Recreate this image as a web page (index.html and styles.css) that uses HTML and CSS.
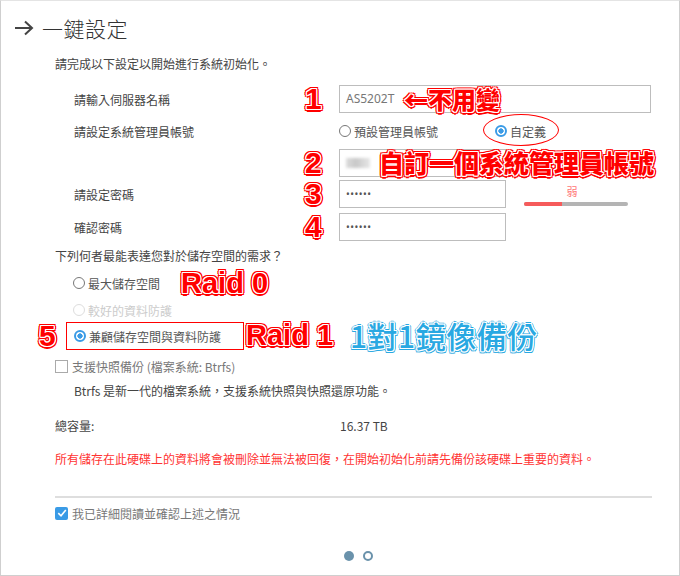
FILE: index.html
```html
<!DOCTYPE html>
<html lang="zh-Hant">
<head>
    <meta charset="UTF-8">
    <meta name="viewport" content="width=device-width, initial-scale=1.0">
    <title>一鍵設定</title>
    <link rel="stylesheet" href="styles.css">
</head>
<body>

    <div class="frame">

        <h1 class="title">
            <svg class="title-arrow" width="20" height="16" viewBox="0 0 20 16">
                <path d="M1 8 H18 M11 1.5 L18 8 L11 14.5" fill="none" stroke="#444" stroke-width="2"/>
            </svg>
            一鍵設定
        </h1>

        <div class="content">
            <p class="intro">請完成以下設定以開始進行系統初始化。</p>

            <div class="row row-name">
                <span class="label">請輸入伺服器名稱</span>
                <span class="mark num">1</span>
                <div class="field wide">
                    AS5202T
                    <span class="mark note-keep">&#8592;不用變</span>
                </div>
            </div>

            <div class="row row-admin">
                <span class="label">請設定系統管理員帳號</span>
                <span class="num"></span>
                <div class="choices">
                    <label class="radio"><span class="dot"></span>預設管理員帳號</label>
                    <label class="radio custom"><span class="dot on"></span>自定義<span class="ring"></span></label>
                </div>
            </div>

            <div class="row row-user">
                <span class="label"></span>
                <span class="mark num">2</span>
                <div class="field">
                    <span class="blur"></span>
                    <span class="mark note-user">自訂一個系統管理員帳號</span>
                </div>
            </div>

            <div class="row row-pass">
                <span class="label">請設定密碼</span>
                <span class="mark num">3</span>
                <div class="field pass">••••••</div>
                <div class="meter">
                    <span class="meter-text">弱</span>
                    <span class="meter-bar"><span class="meter-fill"></span></span>
                </div>
            </div>

            <div class="row row-confirm">
                <span class="label">確認密碼</span>
                <span class="mark num">4</span>
                <div class="field pass">••••••</div>
            </div>

            <p class="question">下列何者最能表達您對於儲存空間的需求？</p>

            <div class="options">
                <label class="radio opt opt-1"><span class="dot"></span>最大儲存空間<span class="mark note-raid0">Raid 0</span></label>
                <label class="radio opt opt-2 disabled"><span class="dot"></span>較好的資料防護</label>
                <label class="radio opt opt-3">
                    <span class="mark num num-5">5</span>
                    <span class="boxed"><span class="dot on"></span>兼顧儲存空間與資料防護</span>
                    <span class="mark note-raid1">Raid 1</span>
                    <span class="mark blue note-mirror">1對1鏡像備份</span>
                </label>
            </div>

            <label class="check snap"><span class="box"></span>支援快照備份 (檔案系統: Btrfs)</label>
            <p class="btrfs">Btrfs 是新一代的檔案系統，支援系統快照與快照還原功能。</p>

            <div class="capacity">
                <span class="cap-label">總容量:</span>
                <span>16.37 TB</span>
            </div>

            <p class="warning">所有儲存在此硬碟上的資料將會被刪除並無法被回復，在開始初始化前請先備份該硬碟上重要的資料。</p>

            <hr class="divider">

            <label class="check ack">
                <span class="box on">
                    <svg width="12" height="12" viewBox="0 0 12 12"><path d="M2.3 6.2 L5 8.8 L9.8 3" fill="none" stroke="#fff" stroke-width="1.6"/></svg>
                </span>我已詳細閱讀並確認上述之情況
            </label>

            <div class="pager">
                <span class="pdot active"></span>
                <span class="pdot"></span>
            </div>
        </div>

    </div>

</body>
</html>
```

FILE: styles.css
```css
body {
    margin: 0;
    background-color: #fff;
    font-family: "Noto Sans CJK TC", "Noto Sans", sans-serif;
    font-size: 12px;
    color: #444;
}

.frame {
    width: 680px;
    height: 576px;
    box-sizing: border-box;
    border: 1px solid #cfcfcf;
    border-top-color: #e4e4e4;
    overflow: hidden;
}

.title {
    margin: 13px 0 0 13px;
    height: 28px;
    display: flex;
    align-items: center;
    gap: 8px;
    font-size: 21px;
    font-weight: 300;
    color: #333;
    letter-spacing: 0.5px;
}

.content {
    padding-left: 54px;
    padding-right: 27px;
}

.intro {
    margin: 14px 0 0;
    line-height: 16px;
}

/* form rows */
.row {
    display: grid;
    grid-template-columns: 229px 36px auto auto;
    justify-content: start;
    align-items: center;
    padding-left: 19px;
    height: 28px;
}

.row-name { margin-top: 12px; }
.row-admin { margin-top: 9px; height: 20px; }
.row-user { margin-top: 7px; }
.row-pass { margin-top: 3px; }
.row-confirm { margin-top: 5px; }

.field {
    position: relative;
    width: 167px;
    height: 28px;
    box-sizing: border-box;
    border: 1px solid #bdbdbd;
    padding-left: 6px;
    line-height: 26px;
    color: #777;
    font-family: "Noto Sans", sans-serif;
}

.field.wide {
    width: 312px;
}

.field.pass {
    color: #555;
    font-size: 10px;
    letter-spacing: 0.5px;
}

.blur {
    display: inline-block;
    width: 24px;
    height: 10px;
    margin-top: 8px;
    background: linear-gradient(90deg, #ddd, #c8c8c8 40%, #e6e6e6);
    filter: blur(1.5px);
}

/* annotations drawn over the screenshot */
.mark {
    font-family: "Liberation Sans", Arial, "Noto Sans CJK TC", sans-serif;
    font-weight: bold;
    color: #f00;
    line-height: 1;
    white-space: nowrap;
    text-shadow:
        1px 0 0 #fff, -1px 0 0 #fff, 0 1px 0 #fff, 0 -1px 0 #fff,
        1px 1px 0 #fff, -1px -1px 0 #fff, 1px -1px 0 #fff, -1px 1px 0 #fff,
        2.5px 0 0 #f00, -2.5px 0 0 #f00, 0 2.5px 0 #f00, 0 -2.5px 0 #f00,
        2px 2px 0 #f00, -2px -2px 0 #f00, 2px -2px 0 #f00, -2px 2px 0 #f00;
}

.mark.blue {
    color: #29a8e2;
    text-shadow:
        1px 0 0 #fff, -1px 0 0 #fff, 0 1px 0 #fff, 0 -1px 0 #fff,
        1px 1px 0 #fff, -1px -1px 0 #fff, 1px -1px 0 #fff, -1px 1px 0 #fff,
        2px 0 0 #29a8e2, -2px 0 0 #29a8e2, 0 2px 0 #29a8e2, 0 -2px 0 #29a8e2,
        1.5px 1.5px 0 #29a8e2, -1.5px -1.5px 0 #29a8e2, 1.5px -1.5px 0 #29a8e2, -1.5px 1.5px 0 #29a8e2;
}

.num {
    font-size: 30px;
    padding-left: 2px;
}

.note-keep {
    position: absolute;
    left: 64px;
    top: 1px;
    font-family: "Noto Sans CJK TC", sans-serif;
    font-size: 24px;
    font-weight: 900;
}

.note-user {
    position: absolute;
    left: 39px;
    top: 0;
    font-family: "Noto Sans CJK TC", sans-serif;
    font-size: 25px;
    font-weight: 900;
}

/* radios */
.choices {
    display: flex;
    grid-column: 3 / 5;
}

.radio {
    position: relative;
    display: flex;
    align-items: center;
    height: 20px;
    color: #555;
}

.radio.custom {
    margin-left: 57px;
}

.dot {
    width: 12px;
    height: 12px;
    box-sizing: border-box;
    border: 1px solid #777;
    border-radius: 50%;
    margin-right: 3px;
    background: #fff;
}

.dot.on {
    border: 2px solid #3a9be6;
    background: radial-gradient(circle, #3a9be6 0 2.4px, #fff 2.9px);
}

.ring {
    position: absolute;
    left: -12px;
    top: -7px;
    width: 76px;
    height: 32px;
    box-sizing: border-box;
    border: 1.5px solid #f00;
    border-radius: 50%;
}

/* password meter */
.meter {
    display: flex;
    flex-direction: column;
    align-items: center;
    width: 104px;
    margin-left: 18px;
    align-self: start;
    padding-top: 5px;
}

.meter-text {
    font-size: 11px;
    line-height: 14px;
    color: #f77;
    margin-left: -8px;
}

.meter-bar {
    display: block;
    width: 104px;
    height: 4px;
    margin-top: 4px;
    border-radius: 2px;
    background: #b4b4b4;
    overflow: hidden;
}

.meter-fill {
    display: block;
    width: 38px;
    height: 4px;
    background: #f65b5b;
}

.question {
    margin: 8px 0 0;
    line-height: 16px;
}

/* storage options */
.options {
    display: flex;
    flex-direction: column;
    padding-left: 18px;
}

.opt-1 { margin-top: 9px; }
.opt-2 { margin-top: 7px; }
.opt-3 { margin-top: 6px; }

.opt.disabled {
    color: #ccc;
}

.opt.disabled .dot {
    border-color: #ddd;
}

.note-raid0 {
    position: absolute;
    left: 108px;
    top: -4px;
    font-size: 29px;
}

.num-5 {
    position: absolute;
    left: -36px;
    top: -5px;
}

.boxed {
    display: flex;
    align-items: center;
    height: 28px;
    margin-left: -7px;
    padding: 0 7px;
    box-sizing: border-box;
    border: 1.5px solid #f00;
    width: 178px;
}

.note-raid1 {
    position: absolute;
    left: 173px;
    top: -5px;
    font-size: 29px;
}

.note-mirror {
    position: absolute;
    left: 277px;
    top: -6px;
    font-family: "Noto Sans CJK TC", sans-serif;
    font-size: 30px;
    font-weight: 500;
    letter-spacing: 0.5px;
}

/* checkboxes */
.check {
    display: flex;
    align-items: center;
    color: #777;
}

.box {
    width: 13px;
    height: 13px;
    box-sizing: border-box;
    border: 1px solid #aaa;
    margin-right: 4px;
    display: flex;
}

.box.on {
    border: none;
    border-radius: 2px;
    background: #3a9be6;
    align-items: center;
    justify-content: center;
}

.snap {
    margin-top: 10px;
    height: 20px;
}

.btrfs {
    margin: 7px 0 0 19px;
    line-height: 16px;
}

.capacity {
    display: flex;
    margin-top: 19px;
    line-height: 16px;
}

.cap-label {
    width: 285px;
}

.warning {
    margin: 17px 0 0;
    line-height: 16px;
    font-size: 12px;
    color: #f33;
}

.divider {
    margin: 29px 0 0;
    border: none;
    height: 2px;
    background: #dedede;
}

.ack {
    margin-top: 7px;
    height: 16px;
}

.pager {
    display: flex;
    justify-content: center;
    gap: 9px;
    margin-top: 30px;
    padding-left: 10px;
}

.pdot {
    width: 10px;
    height: 10px;
    box-sizing: border-box;
    border-radius: 50%;
    background: #6a92ab;
}

.pdot:not(.active) {
    background: #fff;
    border: 2.5px solid #6a92ab;
}
```
